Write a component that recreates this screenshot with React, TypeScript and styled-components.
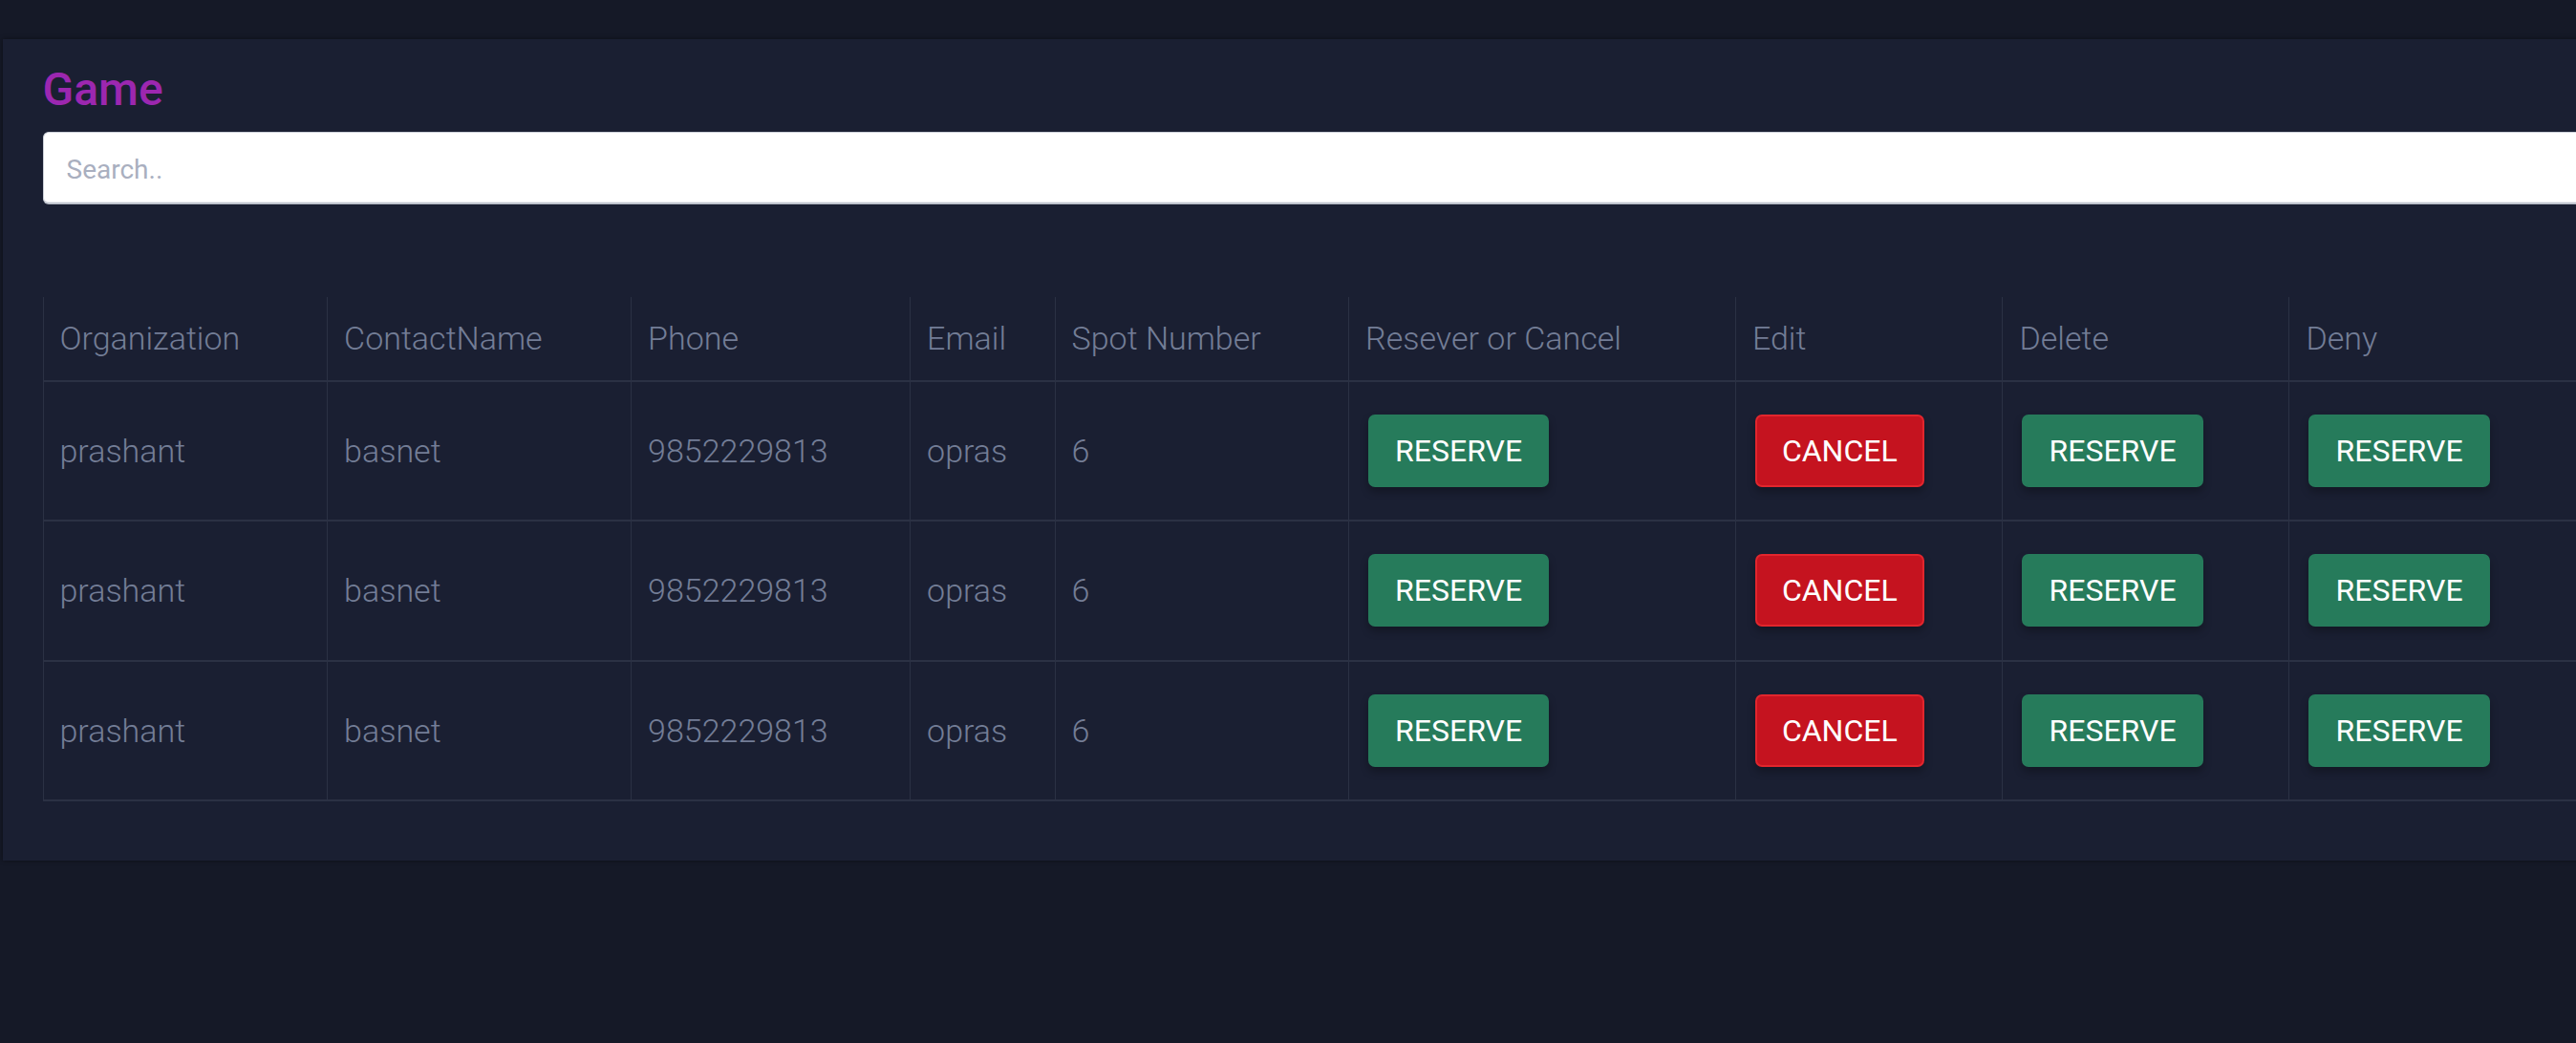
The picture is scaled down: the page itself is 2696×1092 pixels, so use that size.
import React from "react";
import styled, { createGlobalStyle } from "styled-components";

const GlobalStyle = createGlobalStyle`
  html, body {
    margin: 0;
    padding: 0;
    background: #151927;
    overflow: hidden;
    font-family: Roboto, "Liberation Sans", Arial, sans-serif;
  }
`;

const Page = styled.div`
  width: 2696px;
  height: 1092px;
  padding: 41px 0 0 3px;
  box-sizing: border-box;
  background: #151927;
  overflow: hidden;
`;

const Panel = styled.section`
  width: 2760px;
  box-sizing: border-box;
  background: #1a1f32;
  padding: 24px 41px 62px 41.5px;
  box-shadow: 0 0 5px rgba(0, 0, 0, 0.45);
`;

const Title = styled.h1`
  margin: 0;
  font-family: Roboto, "Liberation Sans", Arial, sans-serif;
  font-size: 48px;
  line-height: 1.2;
  font-weight: 500;
  color: #9c27b0;
`;

const SearchInput = styled.input`
  display: block;
  width: 100%;
  height: 76px;
  margin-top: 15px;
  box-sizing: border-box;
  padding: 4px 24px 0;
  border: 1px solid #cdd1d9;
  border-bottom: 2px solid #bfc4cd;
  border-radius: 6px;
  background: #fff;
  box-shadow: inset 0 -1px 0 #eceef2;
  font-family: Roboto, "Liberation Sans", Arial, sans-serif;
  font-size: 28px;
  color: #333;
  outline: none;
  &::placeholder {
    color: #a9afbf;
  }
`;

const Table = styled.table`
  width: 100%;
  margin-top: 97px;
  table-layout: fixed;
  border-collapse: separate;
  border-spacing: 0;
  font-family: Roboto, "Liberation Sans", Arial, sans-serif;
  color: #6d7790;
`;

const HeadCell = styled.th`
  height: 89px;
  box-sizing: border-box;
  padding: 0 17px;
  text-align: left;
  font-size: 34px;
  font-weight: 300;
  color: #737d96;
  border-left: 1px solid #2b3144;
  border-bottom: 2px solid #2b3144;
  vertical-align: middle;
  white-space: nowrap;
`;

const Cell = styled.td`
  height: 146.5px;
  box-sizing: border-box;
  padding: 0 17px;
  font-size: 34px;
  font-weight: 300;
  color: #737d96;
  border-left: 1px solid #2b3144;
  border-bottom: 2px solid #2b3144;
  vertical-align: middle;
  white-space: nowrap;
`;

const ActionButton = styled.button<{ $variant: "reserve" | "cancel" }>`
  height: 76px;
  margin-left: 3px;
  padding: 0 26px;
  box-sizing: border-box;
  border-radius: 7px;
  border: 2px solid ${(p) => (p.$variant === "cancel" ? "#e2262d" : "#267b5b")};
  background: ${(p) => (p.$variant === "cancel" ? "#c5131f" : "#267b5b")};
  color: #ffffff;
  font-family: Roboto, "Liberation Sans", Arial, sans-serif;
  font-size: 32px;
  font-weight: 400;
  text-transform: uppercase;
  box-shadow: 0 5px 8px rgba(0, 0, 0, 0.28);
  cursor: pointer;
  vertical-align: middle;
`;

const columns = [
  { label: "Organization", width: 297.6 },
  { label: "ContactName", width: 318 },
  { label: "Phone", width: 292 },
  { label: "Email", width: 151.5 },
  { label: "Spot Number", width: 307.5 },
  { label: "Resever or Cancel", width: 404.8 },
  { label: "Edit", width: 279.6 },
  { label: "Delete", width: 300 },
  { label: "Deny", width: undefined as number | undefined },
];

const rows = [
  { org: "prashant", contact: "basnet", phone: "9852229813", email: "opras", spot: "6" },
  { org: "prashant", contact: "basnet", phone: "9852229813", email: "opras", spot: "6" },
  { org: "prashant", contact: "basnet", phone: "9852229813", email: "opras", spot: "6" },
];

export default function App() {
  return (
    <>
      <GlobalStyle />
      <Page>
        <Panel>
          <Title>Game</Title>
          <SearchInput placeholder="Search.." />
          <Table>
            <colgroup>
              {columns.map((c, i) => (
                <col key={i} style={c.width ? { width: `${c.width}px` } : undefined} />
              ))}
            </colgroup>
            <thead>
              <tr>
                {columns.map((c) => (
                  <HeadCell key={c.label}>{c.label}</HeadCell>
                ))}
              </tr>
            </thead>
            <tbody>
              {rows.map((r, i) => (
                <tr key={i}>
                  <Cell>{r.org}</Cell>
                  <Cell>{r.contact}</Cell>
                  <Cell>{r.phone}</Cell>
                  <Cell>{r.email}</Cell>
                  <Cell>{r.spot}</Cell>
                  <Cell>
                    <ActionButton $variant="reserve">Reserve</ActionButton>
                  </Cell>
                  <Cell>
                    <ActionButton $variant="cancel">Cancel</ActionButton>
                  </Cell>
                  <Cell>
                    <ActionButton $variant="reserve">Reserve</ActionButton>
                  </Cell>
                  <Cell>
                    <ActionButton $variant="reserve">Reserve</ActionButton>
                  </Cell>
                </tr>
              ))}
            </tbody>
          </Table>
        </Panel>
      </Page>
    </>
  );
}
